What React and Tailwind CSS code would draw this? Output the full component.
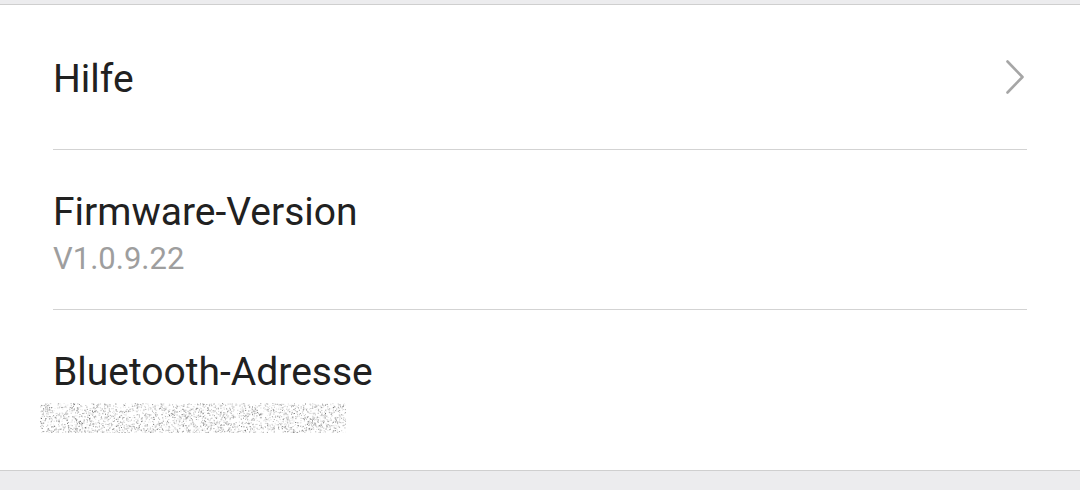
import React from "react";

function Noise() {
  const dots = [];
  let s = 12345;
  const rnd = () => {
    s = (s * 1103515245 + 12345) % 2147483648;
    return s / 2147483648;
  };
  for (let i = 0; i < 2600; i++) {
    const x = rnd() * 306;
    const y = rnd() * 30;
    const g = Math.floor(80 + rnd() * 150);
    dots.push(
      <rect key={i} x={x.toFixed(1)} y={y.toFixed(1)} width="1" height="1" fill={`rgb(${g},${g},${g})`} opacity={(0.3 + rnd() * 0.6).toFixed(2)} />
    );
  }
  return (
    <svg width="306" height="30" viewBox="0 0 306 30" className="block">
      {dots}
    </svg>
  );
}

export default function App() {
  return (
    <div className="w-[1080px] h-[490px] bg-[#ececee] flex flex-col" style={{ fontFamily: "Roboto, 'Noto Sans', sans-serif" }}>
      <div className="h-[4px] shrink-0" />
      <div className="bg-white border-t border-b border-[#cfcfcf] flex flex-col h-[467px] shrink-0">
        <div className="h-[144px] flex items-center pl-[53px] pr-[53px] shrink-0">
          <div className="flex-1 flex items-center justify-between">
            <span className="text-[39px] text-[#212121] leading-[46px] pt-[4px]">Hilfe</span>
            <svg width="22" height="36" viewBox="0 0 22 36" className="mr-[1px]">
              <path d="M3.5 2.5 L18.5 18 L3.5 33.5" fill="none" stroke="#a6a6a6" strokeWidth="2.6" strokeLinecap="round" strokeLinejoin="round" />
            </svg>
          </div>
        </div>
        <div className="mx-[53px] h-px bg-[#d3d3d3] shrink-0" />
        <div className="h-[159px] flex flex-col pl-[53px] pt-[39px] shrink-0">
          <span className="text-[39px] text-[#212121] leading-[46px]">Firmware-Version</span>
          <span className="text-[31px] text-[#9e9e9e] leading-[36px] mt-[6px]">V1.0.9.22</span>
        </div>
        <div className="mx-[53px] h-px bg-[#d3d3d3] shrink-0" />
        <div className="flex-1 flex flex-col pl-[40px] pt-[39px]">
          <span className="text-[39px] text-[#212121] leading-[46px] pl-[13px]">Bluetooth-Adresse</span>
          <div className="mt-[8px]">
            <Noise />
          </div>
        </div>
      </div>
    </div>
  );
}
